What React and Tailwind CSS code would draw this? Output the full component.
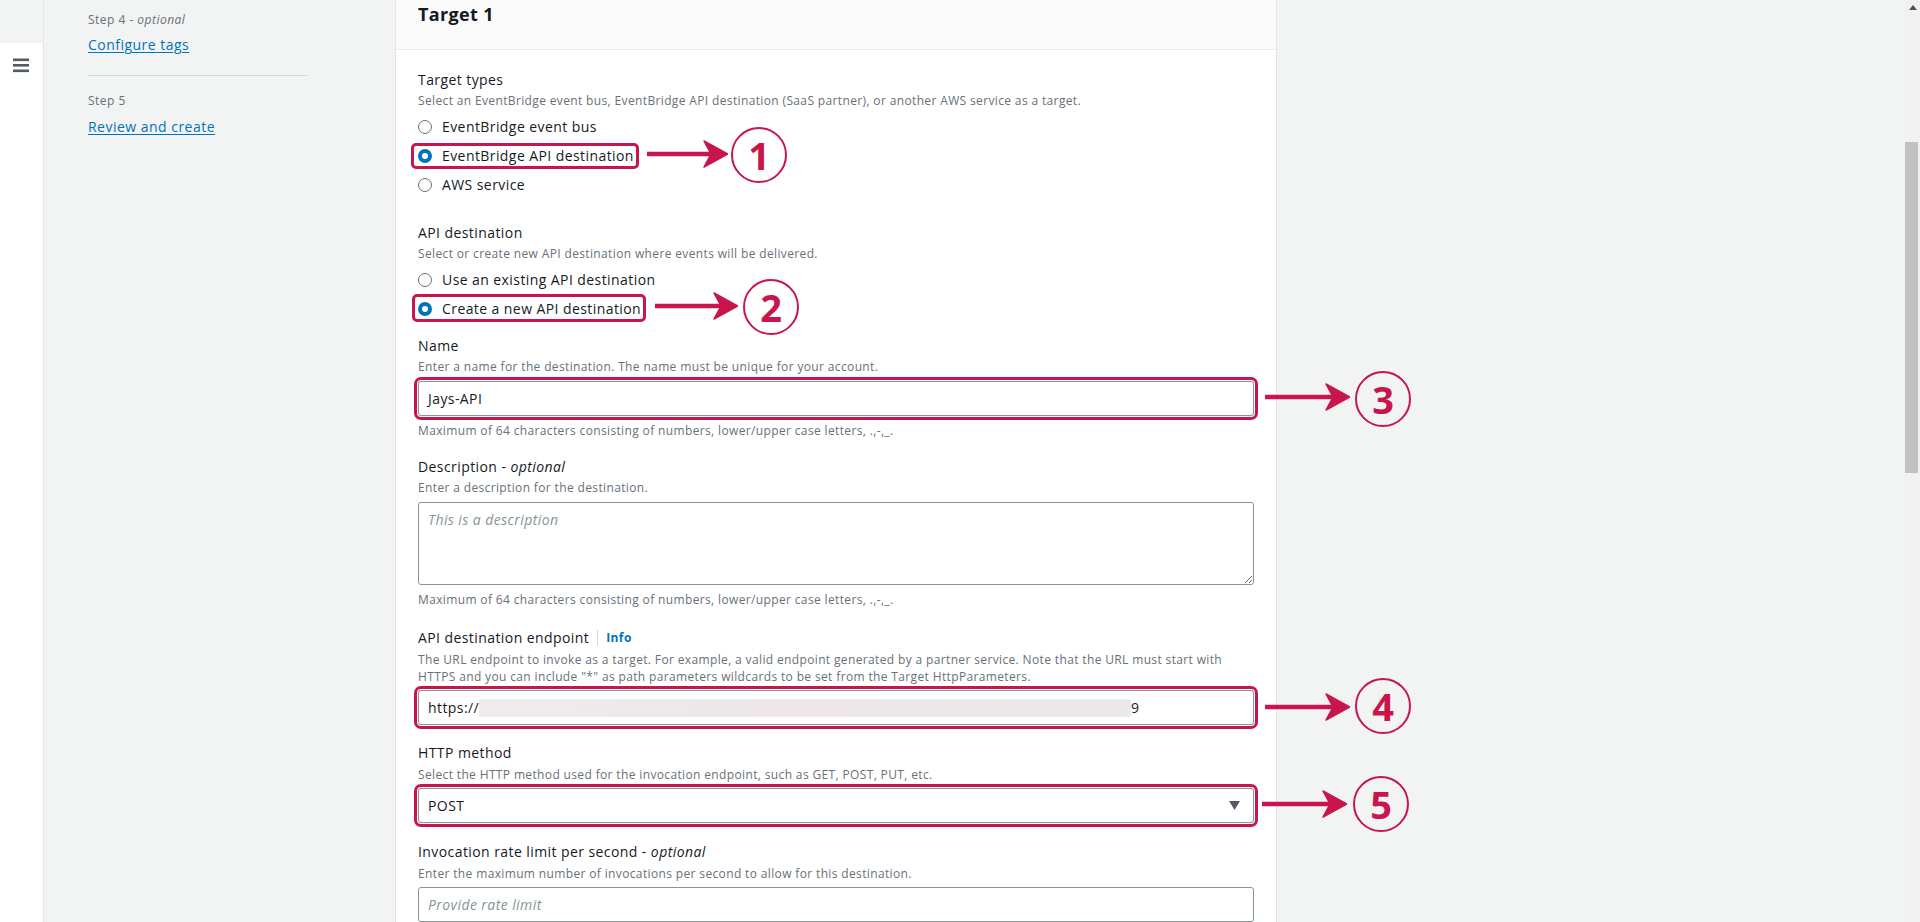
import React from "react";

const RED = "#c8164c";

function Radio({ checked, label, boxed, boxRight = 5, boxLeft = 7, boxTop = 2, boxBottom = 1 }) {
  return (
    <div className="relative flex items-center h-[29px] w-fit">
      {checked ? (
        <span className="w-[14px] h-[14px] rounded-full border-[4px] border-[#0073bb] bg-white shrink-0" />
      ) : (
        <span className="w-[14px] h-[14px] rounded-full border-[1.5px] border-[#687078] bg-white shrink-0" />
      )}
      <span className="ml-[10px] text-[14px] leading-[20px] tracking-[0.03em] text-[#16191f]">{label}</span>
      {boxed && (
        <span
          className="absolute border-[3px] border-[#c8164c] rounded-[5px] pointer-events-none"
          style={{ left: -boxLeft, right: -boxRight, top: boxTop, bottom: boxBottom }}
        />
      )}
    </div>
  );
}

function Label({ children, className = "" }) {
  return <div className={"text-[14px] leading-[20px] tracking-[0.03em] text-[#16191f] " + className}>{children}</div>;
}

function Desc({ children, className = "" }) {
  return <div className={"text-[12px] leading-[16px] tracking-[0.03em] text-[#687078] " + className}>{children}</div>;
}

function Arrow({ x, y, len }) {
  return (
    <svg
      className="absolute pointer-events-none"
      style={{ left: x, top: y - 15 }}
      width={len}
      height={30}
      viewBox={`0 0 ${len} 30`}
    >
      <line x1="0" y1="15" x2={len - 14} y2="15" stroke={RED} strokeWidth="4.5" strokeLinecap="round" />
      <polygon
        points={`${len},15 ${len - 24},2 ${len - 17},15 ${len - 24},28`}
        fill={RED}
        stroke={RED}
        strokeWidth="1.5"
        strokeLinejoin="round"
      />
    </svg>
  );
}

function Circled({ cx, cy, n }) {
  return (
    <div
      className="absolute w-[56px] h-[56px] rounded-full border-2 border-[#c8164c] flex items-center justify-center text-[#c8164c] text-[38px] font-bold leading-none font-['Open_Sans',sans-serif]"
      style={{ left: cx - 28, top: cy - 28 }}
    >
      {n}
    </div>
  );
}

export default function App() {
  return (
    <div className="relative w-full h-[922px] overflow-hidden bg-[#f2f3f3] flex font-['Open_Sans',sans-serif]">
      {/* left strip */}
      <div className="w-[44px] shrink-0 flex flex-col border-r border-[#e3e6e6]">
        <div className="h-[43px] bg-[#f2f3f3]" />
        <div className="flex-1 bg-white flex justify-center pt-[15px]">
          <svg width="16" height="15" viewBox="0 0 16 15" className="ml-[-1px]">
            <rect x="0" y="0.5" width="16" height="2.6" fill="#545b64" />
            <rect x="0" y="6" width="16" height="2.6" fill="#545b64" />
            <rect x="0" y="11.5" width="16" height="2.6" fill="#545b64" />
          </svg>
        </div>
      </div>

      {/* wizard nav */}
      <div className="w-[351px] shrink-0 pl-[44px] pt-[12px] tracking-[0.03em]">
        <div className="text-[12px] leading-[16px] text-[#687078]">
          Step 4 - <span className="italic">optional</span>
        </div>
        <div className="mt-[7px] text-[14px] leading-[20px] text-[#0073bb] underline underline-offset-2">
          Configure tags
        </div>
        <div className="mt-[20px] w-[220px] h-px bg-[#d5dbdb]" />
        <div className="mt-[17px] text-[12px] leading-[16px] text-[#687078]">Step 5</div>
        <div className="mt-[8px] text-[14px] leading-[20px] text-[#0073bb] underline underline-offset-2">
          Review and create
        </div>
      </div>

      {/* card */}
      <div className="w-[882px] shrink-0 bg-white border-x border-[#e3e6e6] flex flex-col">
        <div className="h-[50px] bg-[#fafafa] border-b border-[#eaeded] px-[22px] pt-[2px]">
          <div className="text-[18px] leading-[24px] font-bold text-[#16191f] tracking-[0.02em]">Target 1</div>
        </div>
        <div className="px-[22px] pt-[20px]">
          <Label>Target types</Label>
          <Desc className="mt-[3px]">
            Select an EventBridge event bus, EventBridge API destination (SaaS partner), or another AWS service as a target.
          </Desc>
          <div className="mt-[3px] flex flex-col">
            <Radio label="EventBridge event bus" />
            <Radio label="EventBridge API destination" checked boxed />
            <Radio label="AWS service" />
          </div>

          <Label className="mt-[24px]">API destination</Label>
          <Desc className="mt-[3px]">Select or create new API destination where events will be delivered.</Desc>
          <div className="mt-[3px] flex flex-col">
            <Radio label="Use an existing API destination" />
            <Radio label="Create a new API destination" checked boxed boxLeft={6} boxTop={0} boxBottom={1} />
          </div>

          <Label className="mt-[13px]">Name</Label>
          <Desc className="mt-[3px]">Enter a name for the destination. The name must be unique for your account.</Desc>
          <div className="mt-[6px] h-[35px] border border-[#879596] rounded-[3px] flex items-center px-[9px] text-[14px] tracking-[0.03em] text-[#16191f] ring-[3px] ring-[#c8164c] ring-offset-1">
            Jays-API
          </div>
          <Desc className="mt-[7px]">Maximum of 64 characters consisting of numbers, lower/upper case letters, .,-,_.</Desc>

          <Label className="mt-[18px]">
            Description - <span className="italic">optional</span>
          </Label>
          <Desc className="mt-[3px]">Enter a description for the destination.</Desc>
          <textarea
            className="mt-[6px] block w-full h-[83px] border border-[#879596] rounded-[3px] px-[9px] py-[7px] text-[14px] leading-[20px] tracking-[0.03em] text-[#16191f] placeholder:italic placeholder:text-[#879596] outline-none resize-y font-['Open_Sans',sans-serif]"
            placeholder="This is a description"
          />
          <Desc className="mt-[7px]">Maximum of 64 characters consisting of numbers, lower/upper case letters, .,-,_.</Desc>

          <div className="mt-[20px] flex items-center text-[14px] leading-[20px] tracking-[0.03em] text-[#16191f]">
            <span>API destination endpoint</span>
            <span className="mx-[8px] w-px h-[16px] bg-[#d5dbdb]" />
            <span className="text-[12px] font-bold text-[#0073bb]">Info</span>
          </div>
          <div className="mt-[3px] text-[12px] leading-[17px] tracking-[0.03em] text-[#687078] whitespace-nowrap">
            The URL endpoint to invoke as a target. For example, a valid endpoint generated by a partner service. Note that the URL must start with
            <br />
            HTTPS and you can include "*" as path parameters wildcards to be set from the Target HttpParameters.
          </div>
          <div className="mt-[5px] h-[35px] border border-[#879596] rounded-[3px] flex items-center px-[9px] text-[14px] tracking-[0.03em] text-[#16191f] ring-[3px] ring-[#c8164c] ring-offset-1">
            <span>https://</span>
            <span className="h-[18px] w-[652px] bg-gradient-to-r from-[#efebec] via-[#eee6e8] to-[#ebe8e9] rounded-[2px]" />
            <span>9</span>
          </div>

          <Label className="mt-[18px]">HTTP method</Label>
          <Desc className="mt-[4px]">Select the HTTP method used for the invocation endpoint, such as GET, POST, PUT, etc.</Desc>
          <div className="mt-[5px] h-[35px] border border-[#879596] rounded-[3px] flex items-center justify-between pl-[9px] pr-[13px] text-[14px] tracking-[0.03em] text-[#16191f] ring-[3px] ring-[#c8164c] ring-offset-1">
            <span>POST</span>
            <svg width="11" height="9" viewBox="0 0 11 9">
              <polygon points="0,0 11,0 5.5,9" fill="#545b64" />
            </svg>
          </div>

          <Label className="mt-[19px]">
            Invocation rate limit per second - <span className="italic">optional</span>
          </Label>
          <Desc className="mt-[4px]">Enter the maximum number of invocations per second to allow for this destination.</Desc>
          <div className="mt-[5px] h-[35px] border border-[#879596] rounded-[3px] flex items-center px-[9px] text-[14px] tracking-[0.03em] italic text-[#879596]">
            Provide rate limit
          </div>
        </div>
      </div>

      {/* right empty area */}
      <div className="flex-1" />

      {/* scrollbar */}
      <div className="w-[15px] shrink-0 bg-[#f1f1f1] flex flex-col">
        <div className="h-[142px] flex justify-center pt-[5px]">
          <svg width="8" height="5" viewBox="0 0 8 5">
            <polygon points="4,0 8,5 0,5" fill="#505050" />
          </svg>
        </div>
        <div className="h-[331px] w-[13px] bg-[#c1c1c1]" />
      </div>

      {/* annotations */}
      <Arrow x={647} y={154} len={81} />
      <Circled cx={759} cy={155} n="1" />
      <Arrow x={655} y={306} len={83} />
      <Circled cx={771} cy={307} n="2" />
      <Arrow x={1265} y={397} len={85} />
      <Circled cx={1383} cy={399} n="3" />
      <Arrow x={1265} y={707} len={85} />
      <Circled cx={1383} cy={706} n="4" />
      <Arrow x={1262} y={804} len={85} />
      <Circled cx={1381} cy={804} n="5" />
    </div>
  );
}
